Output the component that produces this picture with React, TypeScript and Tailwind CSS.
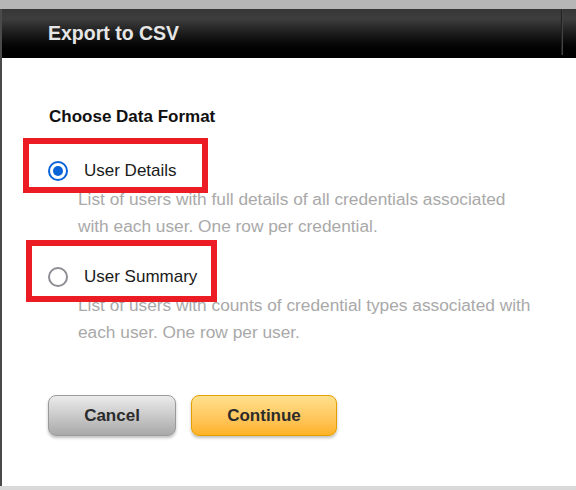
import { useState } from "react";

const options = [
    {
        id: "details",
        label: "User Details",
        description:
            "List of users with full details of all credentials associated with each user. One row per credential.",
    },
    {
        id: "summary",
        label: "User Summary",
        description:
            "List of users with counts of credential types associated with each user. One row per user.",
    },
];

const Radio = ({ checked }: { checked: boolean }) =>
    checked ? (
        <span className="flex h-[20px] w-[20px] items-center justify-center rounded-full border-[2.5px] border-[#0b63d8] bg-white">
            <span className="h-[10px] w-[10px] rounded-full bg-[#0b63d8]" />
        </span>
    ) : (
        <span className="h-[20px] w-[20px] rounded-full border-[2.5px] border-[#8e8c95] bg-white" />
    );

export default function App() {
    const [format, setFormat] = useState("details");

    return (
        <div
            className="flex h-[490px] w-[576px] flex-col overflow-hidden bg-[#b5b6b5] pt-[9px]"
            style={{ fontFamily: '"Liberation Sans", Arial, sans-serif' }}
        >
            <div className="flex flex-1">
                <div className="w-[2px] bg-[#4a4a4a]" />
                <div className="relative flex flex-1 flex-col bg-white">
                    {/* title bar */}
                    <div className="relative flex h-[49px] items-center bg-gradient-to-b from-[#363636] via-[#3e3e3e] via-20% to-[#000] pl-[46px]">
                        <span className="text-[19.5px] font-bold text-[#e6e6e6]">Export to CSV</span>
                        <div className="absolute top-0 right-[13px] h-[46px] w-[2px] bg-gradient-to-r from-[#111] to-[#555]" />
                    </div>

                    <div className="flex flex-col pl-[46px]">
                        <p className="mt-[49px] ml-[1px] text-[17px] leading-[20px] font-bold text-[#111]">
                            Choose Data Format
                        </p>

                        {options.map((opt, i) => (
                            <div key={opt.id} className={i === 0 ? "mt-[31px]" : "mt-[24px]"}>
                                <label
                                    className="flex h-[26px] cursor-pointer items-center gap-[16px]"
                                    onClick={() => setFormat(opt.id)}
                                >
                                    <Radio checked={format === opt.id} />
                                    <span className="text-[17px] text-[#1a1a1a]">{opt.label}</span>
                                </label>
                                <p className="mt-[2px] w-[490px] pl-[30px] text-[17.3px] leading-[27px] text-[#a9a9a9]">
                                    {opt.description}
                                </p>
                            </div>
                        ))}

                        <div className="mt-[49px] flex gap-[15px]">
                            <button className="h-[41px] w-[128px] rounded-[8px] border border-[#9a9a9a] bg-gradient-to-b from-[#ececec] to-[#a9a9a9] text-[17px] font-bold text-[#2b2b2b] shadow-[0_2px_3px_rgba(0,0,0,0.25)]">
                                Cancel
                            </button>
                            <button className="h-[41px] w-[146px] rounded-[8px] border border-[#e3a000] bg-gradient-to-b from-[#ffe08c] to-[#ffb224] text-[17px] font-bold text-[#2b2b2b] shadow-[0_2px_3px_rgba(0,0,0,0.25)]">
                                Continue
                            </button>
                        </div>
                    </div>

                    {/* red annotation boxes */}
                    <div className="absolute top-[129px] left-[21px] h-[55px] w-[185px] border-[6px] border-[#ec1c24]" />
                    <div className="absolute top-[231px] left-[24px] h-[62px] w-[191px] border-[6px] border-[#ec1c24]" />
                </div>
            </div>
            <div className="h-[4px] bg-[#d9d9d9]" />
        </div>
    );
}
